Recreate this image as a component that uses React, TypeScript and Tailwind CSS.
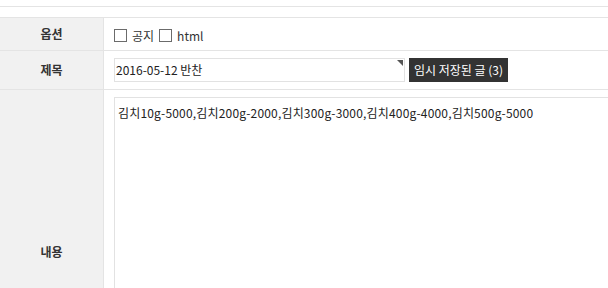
import React from "react";

const FONT = "font-['Noto_Sans_CJK_KR','Noto_Sans',sans-serif]";

function Label({ children }: { children: React.ReactNode }) {
  return (
    <div className="w-[104px] shrink-0 bg-[#f1f1f1] border-r border-[#e4e4e4] flex items-center justify-center text-[12px] font-bold text-[#333]">
      {children}
    </div>
  );
}

function Check({ label }: { label: string }) {
  return (
    <label className="flex items-center gap-[5px]">
      <span className="w-[13px] h-[13px] border border-[#6b6b6b] bg-white" />
      <span>{label}</span>
    </label>
  );
}

export default function App() {
  return (
    <div className={`${FONT} w-[608px] h-[288px] overflow-hidden bg-white text-[12px] text-[#222]`}>
      <div className="h-[6px]" />
      <div className="h-[11px] border-t border-[#e4e4e4]" />
      <div className="border-t border-[#e4e4e4]">
        {/* 옵션 */}
        <div className="flex h-[33px] border-b border-[#e4e4e4]">
          <Label>옵션</Label>
          <div className="flex items-center gap-[5px] pl-[10px] pt-[3px] text-[#333]">
            <Check label="공지" />
            <Check label="html" />
          </div>
        </div>

        {/* 제목 */}
        <div className="flex h-[39px] border-b border-[#e4e4e4]">
          <Label>제목</Label>
          <div className="flex items-center gap-[4px] pl-[10px]">
            <div className="relative w-[291px] h-[24px] border border-[#e2e2e2] flex items-center pl-[1px]">
              2016-05-12 반찬
              <span className="absolute top-[1px] right-[1px] w-0 h-0 border-t-[6px] border-l-[6px] border-t-[#555] border-l-transparent" />
            </div>
            <button type="button" className="h-[24px] px-[5px] bg-[#333] text-white text-[12px] flex items-center">
              임시 저장된 글 (3)
            </button>
          </div>
        </div>

        {/* 내용 */}
        <div className="flex h-[324px]">
          <Label>내용</Label>
          <div className="flex-1 pl-[10px] pt-[7px]">
            <div className="w-[520px] h-[310px] border border-[#e2e2e2] px-[3px] pt-[7px] leading-[16px] tracking-[0.18px]">
              김치10g-5000,김치200g-2000,김치300g-3000,김치400g-4000,김치500g-5000
            </div>
          </div>
        </div>
      </div>
    </div>
  );
}
